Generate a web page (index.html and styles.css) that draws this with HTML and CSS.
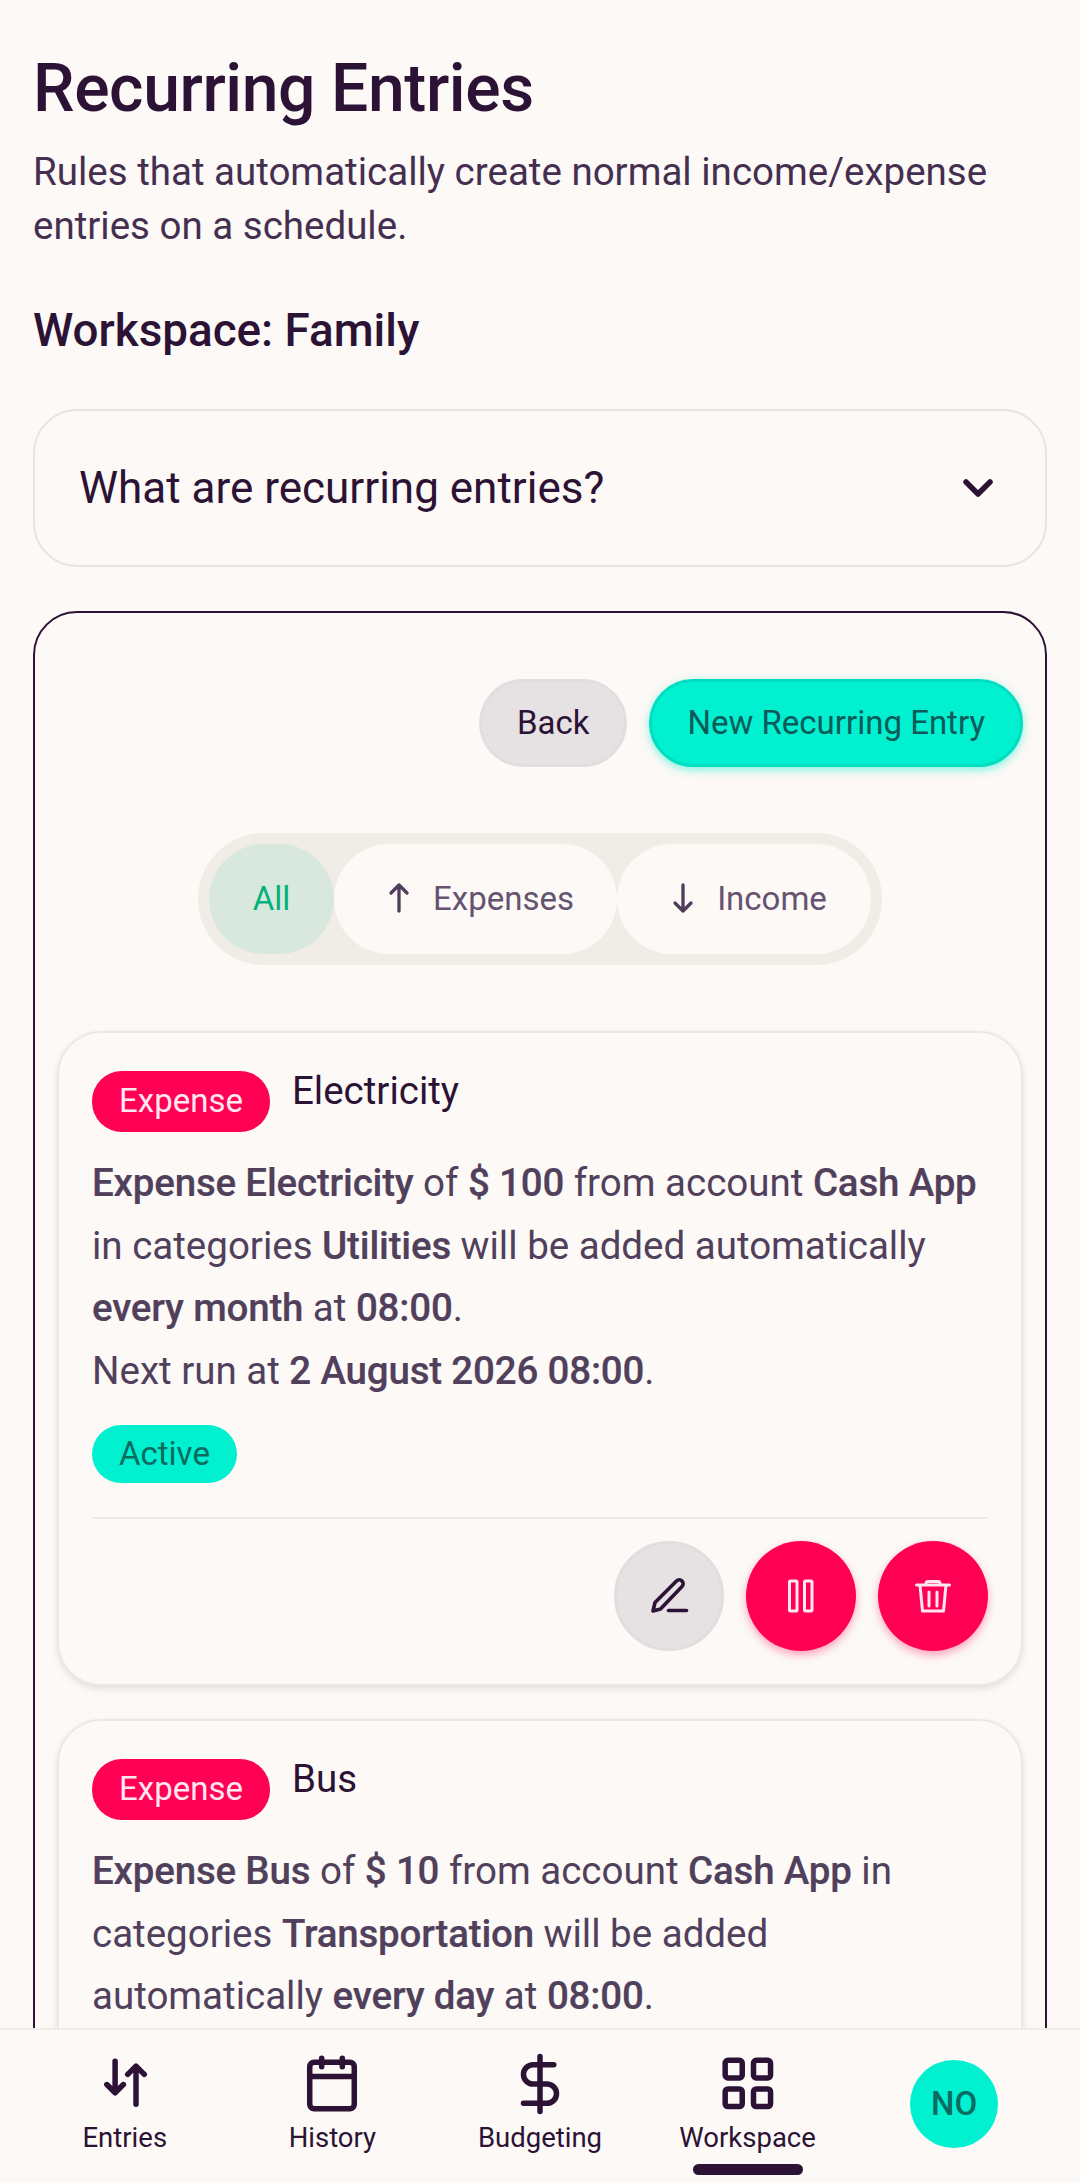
FILE: index.html
```html
<!DOCTYPE html>
<html lang="en">
<head>
<meta charset="utf-8">
<title>Recurring Entries</title>
<link rel="stylesheet" href="styles.css">
</head>
<body>
<div class="screen">
  <main class="content">
    <h1 class="title">Recurring Entries</h1>
    <p class="subtitle">Rules that automatically create normal income/expense entries on a schedule.</p>
    <h2 class="workspace">Workspace: Family</h2>
    <div class="accordion">
      <span>What are recurring entries?</span>
      <svg class="chevron" viewBox="0 0 32 20"><path d="M4 4l12 12L28 4"/></svg>
    </div>
    <section class="panel">
      <div class="actions">
        <button class="btn btn-back">Back</button>
        <button class="btn btn-new">New Recurring Entry</button>
      </div>
      <div class="segment-wrap">
        <div class="segment">
          <div class="seg seg-all">All</div>
          <div class="seg seg-exp">
            <svg class="seg-icon" viewBox="0 0 24 36"><path d="M12 31V5M4 13l8-8 8 8"/></svg>
            <span>Expenses</span>
          </div>
          <div class="seg seg-inc">
            <svg class="seg-icon" viewBox="0 0 24 36"><path d="M12 5v26M4 23l8 8 8-8"/></svg>
            <span>Income</span>
          </div>
        </div>
      </div>
      <article class="card">
        <div class="card-head">
          <span class="badge badge-expense">Expense</span>
          <span class="card-name">Electricity</span>
        </div>
        <p class="desc"><b>Expense Electricity</b> of <b>$ 100</b> from account <b>Cash App</b> in categories <b>Utilities</b> will be added automatically <b>every month</b> at <b>08:00</b>.<br>Next run at <b>2 August 2026 08:00</b>.</p>
        <span class="badge badge-active">Active</span>
        <div class="card-actions">
          <button class="round round-grey">
            <svg viewBox="0 0 44 44"><path d="M6 37l2-8.500L29.500 7a3.800 3.800 0 0 1 5.500 5.500L13.500 35z"/><path d="M21.500 36.500h18"/></svg>
          </button>
          <button class="round round-red">
            <svg viewBox="0 0 44 44"><rect x="10.500" y="7" width="7.500" height="30" rx="1"/><rect x="25.500" y="7" width="7.500" height="30" rx="1"/></svg>
          </button>
          <button class="round round-red">
            <svg viewBox="0 0 44 44"><path d="M5.500 11h33M9 11l2.500 26h21L35 11M15 11V9.500a2 2 0 0 1 2-2h10a2 2 0 0 1 2 2V11M18 18v14M26 18v14"/></svg>
          </button>
        </div>
      </article>
      <article class="card card-clipped">
        <div class="card-head">
          <span class="badge badge-expense">Expense</span>
          <span class="card-name">Bus</span>
        </div>
        <p class="desc"><b>Expense Bus</b> of <b>$ 10</b> from account <b>Cash App</b> in categories <b>Transportation</b> will be added automatically <b>every day</b> at <b>08:00</b>.</p>
      </article>
    </section>
  </main>
  <nav class="tabbar">
    <div class="tab">
      <svg viewBox="0 0 24 24"><path d="M8.400 3.700v11.500M5.400 12.200l3 3 3-3M16 19.400V5.500M13 8.500l3-3 3 3"/></svg>
      <span>Entries</span>
    </div>
    <div class="tab">
      <svg viewBox="0 0 24 24"><rect x="3.900" y="4.100" width="16.200" height="16.900" rx="1.600"/><path d="M3.900 9.300h16.200M8.250 2.600v3.100M15.750 2.600v3.100"/></svg>
      <span>History</span>
    </div>
    <div class="tab">
      <svg viewBox="0 0 24 24"><path d="M12 2v20M17 5H9.500a3.500 3.500 0 0 0 0 7h5a3.500 3.500 0 0 1 0 7H6"/></svg>
      <span>Budgeting</span>
    </div>
    <div class="tab tab-current">
      <svg viewBox="0 0 24 24"><rect x="3.700" y="3.400" width="6.200" height="6.400" rx="1"/><rect x="14" y="3.400" width="6.200" height="6.400" rx="1"/><rect x="3.700" y="13.800" width="6.200" height="6.400" rx="1"/><rect x="14" y="13.800" width="6.200" height="6.400" rx="1"/></svg>
      <span>Workspace</span>
    </div>
    <div class="tab tab-avatar"><div class="avatar">NO</div></div>
  </nav>
</div>
</body>
</html>
```
FILE: styles.css
```css
* { box-sizing: border-box; }
html, body { margin: 0; padding: 0; height: 100%; }
body {
  background: #fcf9f6;
  color: #2c1235;
  font-family: Roboto, "Noto Sans", sans-serif;
}
.screen {
  width: 1080px;
  height: 2183px;
  display: flex;
  flex-direction: column;
  overflow: hidden;
}
.content {
  flex: 1;
  min-height: 0;
  overflow: hidden;
  padding: 50px 33px 0;
}
.title {
  margin: 0;
  font-size: 66px;
  line-height: 78px;
  font-weight: 500;
  letter-spacing: -0.4px;
}
.subtitle {
  margin: 17px 0 0;
  font-size: 38.5px;
  line-height: 54px;
  color: #452f50;
}
.workspace {
  margin: 48px 0 0;
  font-size: 45.800px;
  line-height: 60px;
  font-weight: 500;
}
.accordion {
  margin-top: 48px;
  height: 158px;
  border: 2px solid #e8e4e2;
  border-radius: 44px;
  padding: 0 51px 0 44px;
  display: flex;
  align-items: center;
  justify-content: space-between;
  font-size: 44px;
}
.chevron {
  width: 32px;
  height: 20px;
  fill: none;
  stroke: #2c1235;
  stroke-width: 5.5;
  stroke-linecap: round;
  stroke-linejoin: round;
}
.panel {
  margin-top: 44px;
  border: 2.500px solid #2c1235;
  border-radius: 44px;
  padding: 66px 22px 0;
  height: 1500px;
}
.actions {
  display: flex;
  justify-content: flex-end;
  gap: 22px;
}
.btn {
  height: 88px;
  border-radius: 44px;
  font-family: inherit;
  font-size: 33px;
  padding: 0 35px 2px;
}
.btn-back {
  background: #e6e2e4;
  border: 3px solid #e2dedf;
  color: #2c1235;
}
.btn-new {
  background: #00f0d0;
  border: 3px solid #00ddc0;
  color: #0d5a58;
  box-shadow: 0 3px 8px rgba(0, 240, 208, 0.5);
}
.segment-wrap {
  margin-top: 66px;
  display: flex;
  justify-content: center;
}
.segment {
  display: flex;
  height: 132px;
  padding: 11px;
  border-radius: 66px;
  background: #f0ece6;
}
.seg {
  display: flex;
  align-items: center;
  justify-content: center;
  gap: 22px;
  border-radius: 55px;
  font-size: 33px;
  color: #65536f;
  padding-bottom: 2px;
}
.seg-all {
  width: 125px;
  background: #d9e8de;
  color: #00b37a;
}
.seg-exp { width: 283px; padding-left: 10px; background: #fcf9f6; }
.seg-inc { width: 254px; padding-left: 10px; background: #fcf9f6; }
.seg-icon {
  width: 24px;
  height: 36px;
  fill: none;
  stroke: #4f3d5a;
  stroke-width: 3.300;
  stroke-linecap: round;
  stroke-linejoin: round;
}
.card {
  margin-top: 66px;
  padding: 38px 33px 33px;
  border: 2px solid #ece8e6;
  border-radius: 44px;
  background: #fcf9f6;
  box-shadow: 0 3px 6px rgba(70, 50, 60, 0.12);
}
.card + .card { margin-top: 33px; }
.card-clipped { min-height: 500px; }
.card-head {
  display: flex;
  align-items: flex-start;
  gap: 22px;
}
.badge {
  display: inline-flex;
  align-items: center;
  border-radius: 30px;
  font-size: 33px;
}
.badge-expense {
  height: 61px;
  padding: 0 27px 2px;
  background: #ff0055;
  color: #ffe6ef;
}
.badge-active {
  height: 58px;
  padding: 0 27px;
  margin-top: 22px;
  background: #00f0d0;
  color: #0b6b60;
}
.card-name {
  font-size: 38.500px;
  line-height: 40px;
  color: #2c1235;
}
.desc {
  margin: 20px 0 0;
  font-size: 38.500px;
  line-height: 62.700px;
  color: #50405c;
}
.desc b { font-weight: 500; letter-spacing: -0.18px; -webkit-text-stroke: 0.2px #50405c; }
.card-actions {
  margin-top: 34px;
  padding-top: 22px;
  border-top: 2px solid #eeeae7;
  display: flex;
  justify-content: flex-end;
  gap: 22px;
}
.round {
  width: 110px;
  height: 110px;
  border-radius: 50%;
  padding: 0;
  border: 0;
  display: flex;
  align-items: center;
  justify-content: center;
}
.round svg {
  width: 44px;
  height: 44px;
  fill: none;
  stroke-linecap: round;
  stroke-linejoin: round;
  stroke-width: 3;
}
.round-grey {
  background: #e6e2e4;
  border: 3px solid #e2dedf;
}
.round-grey svg { stroke: #2c1235; stroke-width: 3.600; }
.round-red {
  background: #ff0055;
  box-shadow: 0 4px 8px rgba(255, 0, 85, 0.35);
}
.round-red svg { stroke: #ffe6ef; }
.tabbar {
  height: 155px;
  flex: none;
  display: grid;
  grid-template-columns: repeat(5, 1fr);
  padding: 0 21px;
  background: #fcf9f6;
  border-top: 2px solid #efebe8;
}
.tab {
  display: flex;
  flex-direction: column;
  align-items: center;
  padding-top: 20.500px;
  font-size: 27.500px;
  line-height: 34px;
  color: #2c1235;
  position: relative;
}
.tab svg {
  width: 66px;
  height: 66px;
  fill: none;
  stroke: #2c1235;
  stroke-width: 2;
  stroke-linecap: round;
  stroke-linejoin: round;
  margin-bottom: 4px;
}
.tab-current::after {
  content: "";
  position: absolute;
  left: 50%;
  bottom: 8px;
  width: 110px;
  height: 11px;
  margin-left: -55px;
  border-radius: 6px;
  background: #2c1235;
}
.tab-avatar { padding-top: 30px; left: -1px; }
.avatar {
  width: 88px;
  height: 88px;
  border-radius: 50%;
  background: #00f0d0;
  color: #0b6b60;
  display: flex;
  align-items: center;
  justify-content: center;
  font-size: 33px;
  font-weight: 500;
}
```
